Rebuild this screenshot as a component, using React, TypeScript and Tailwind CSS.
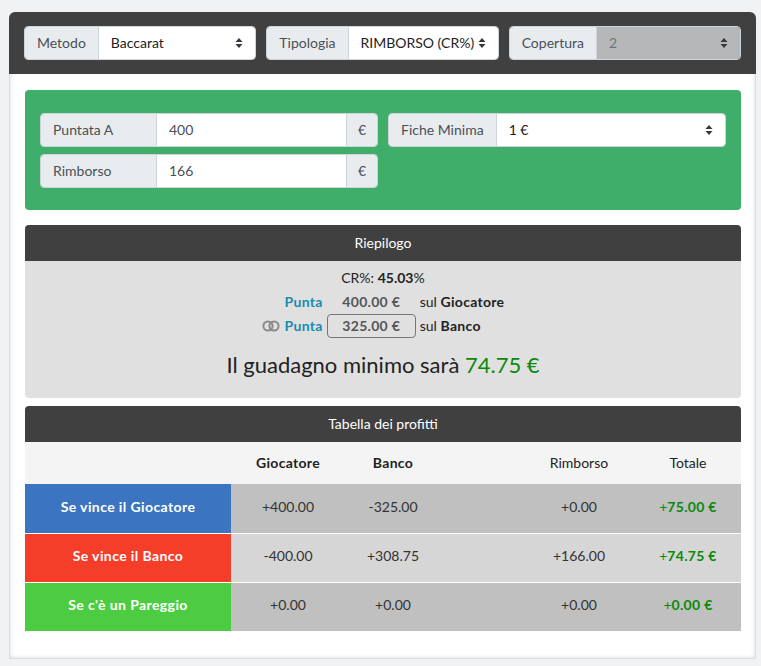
import React from "react";

const Caret = () => (
  <svg width="8" height="12" viewBox="0 0 8 12" className="shrink-0">
    <path d="M4 1 L7.5 5 H0.5 Z" fill="#343a40" />
    <path d="M4 11 L7.5 7 H0.5 Z" fill="#343a40" />
  </svg>
);

function SelectGroup({ label, value, disabled }: { label: string; value: string; disabled?: boolean }) {
  return (
    <div className="flex-1 flex h-[34px] rounded-[4px] border border-[#ced4da] overflow-hidden">
      <div className="flex items-center px-3 bg-[#e9ecef] text-[#495057] border-r border-[#ced4da] whitespace-nowrap">{label}</div>
      <div
        className={
          disabled
            ? "flex-1 flex items-center justify-between pl-3 pr-3 bg-[#b6b7b9] text-[#6c757d]"
            : "flex-1 flex items-center justify-between pl-3 pr-3 bg-white text-[#222]"
        }
      >
        <span className="whitespace-nowrap">{value}</span>
        <Caret />
      </div>
    </div>
  );
}

function InputGroup({ label, value }: { label: string; value: string }) {
  return (
    <div className="flex h-[34px] rounded-[4px] border border-[#ced4da] overflow-hidden">
      <div className="flex items-center w-[116px] px-3 bg-[#e9ecef] text-[#495057] border-r border-[#ced4da] whitespace-nowrap">{label}</div>
      <div className="flex-1 flex items-center px-3 bg-white text-[#495057]">{value}</div>
      <div className="flex items-center justify-center w-[31px] bg-[#e9ecef] text-[#495057] border-l border-[#ced4da]">€</div>
    </div>
  );
}

const rows = [
  { label: "Se vince il Giocatore", color: "bg-[#3b74c1]", bg: "bg-[#c0c0c0]", g: "+400.00", b: "-325.00", r: "+0.00", t: "75.00 €" },
  { label: "Se vince il Banco", color: "bg-[#f53e29]", bg: "bg-[#d6d6d6]", g: "-400.00", b: "+308.75", r: "+166.00", t: "74.75 €" },
  { label: "Se c'è un Pareggio", color: "bg-[#4ccd41]", bg: "bg-[#c0c0c0]", g: "+0.00", b: "+0.00", r: "+0.00", t: "0.00 €" },
];

export default function App() {
  return (
    <div
      className="min-h-screen bg-[#f1f2f4] pt-3 pl-[9px] text-[14px] leading-[20px]"
      style={{ fontFamily: '"Segoe UI", Lato, "Noto Sans", sans-serif' }}
    >
      <div className="w-[747px]">
        {/* top bar */}
        <div className="bg-[#404040] rounded-t-[6px] h-[62px] pl-[15px] pr-[15px] flex items-center gap-[10px]">
          <SelectGroup label="Metodo" value="Baccarat" />
          <SelectGroup label="Tipologia" value="RIMBORSO (CR%)" />
          <SelectGroup label="Copertura" value="2" disabled />
        </div>

        {/* card */}
        <div className="bg-white border-x border-b border-[#dcdcdc] shadow-[inset_3px_0_4px_-2px_rgba(0,0,0,0.08),inset_-3px_0_4px_-2px_rgba(0,0,0,0.08),inset_0_-3px_4px_-2px_rgba(0,0,0,0.08)] pl-[15px] pr-[14px] pt-4 pb-[27px]">
          {/* green panel */}
          <div className="bg-[#3fae6b] rounded-[4px] px-[15px] pt-[23px] pb-[22px] grid grid-cols-2 gap-x-[10px] gap-y-[7px]">
            <InputGroup label="Puntata A" value="400" />
            <div className="flex h-[34px] rounded-[4px] border border-[#ced4da] overflow-hidden">
              <div className="flex items-center px-3 bg-[#e9ecef] text-[#495057] border-r border-[#ced4da] whitespace-nowrap">Fiche Minima</div>
              <div className="flex-1 flex items-center justify-between px-3 bg-white text-[#222]">
                <span>1 €</span>
                <Caret />
              </div>
            </div>
            <InputGroup label="Rimborso" value="166" />
          </div>

          {/* summary */}
          <div className="mt-[15px] rounded-[4px] overflow-hidden">
            <div className="bg-[#404040] h-[36px] flex items-center justify-center text-white">Riepilogo</div>
            <div className="bg-[#e0e0e0] pt-[7px] pb-[18px] text-[#222]">
              <div className="text-center">
                CR%: <b>45.03</b>%
              </div>
              <div className="w-fit mx-auto grid grid-cols-[auto_auto_auto] gap-x-[4px] gap-y-[0px] items-center mt-[2px]">
                <div className="flex justify-end items-center h-[24px]">
                  <span className="font-bold tracking-[0.3px] text-[#1a8bb1]">Punta</span>
                </div>
                <div className="w-[89px] h-[24px] flex items-center justify-center font-bold tracking-[0.3px] text-[#555]">400.00 €</div>
                <div>
                  sul <b className="tracking-[0.3px]">Giocatore</b>
                </div>
                <div className="flex justify-end items-center gap-[5px] h-[24px]">
                  <svg width="18" height="12" viewBox="0 0 18 12">
                    <circle cx="6" cy="6" r="4.6" fill="none" stroke="#8a8a8a" strokeWidth="2" />
                    <circle cx="12" cy="6" r="4.6" fill="none" stroke="#8a8a8a" strokeWidth="2" />
                  </svg>
                  <span className="font-bold tracking-[0.3px] text-[#1a8bb1]">Punta</span>
                </div>
                <div className="w-[89px] h-[24px] flex items-center justify-center font-bold tracking-[0.3px] text-[#555] border border-[#767676] rounded-[4px]">
                  325.00 €
                </div>
                <div>
                  sul <b className="tracking-[0.3px]">Banco</b>
                </div>
              </div>
              <div className="text-center text-[22px] leading-[30px] mt-[12px]">
                Il guadagno minimo sarà <span className="text-[#0a8a0a]">74.75 €</span>
              </div>
            </div>
          </div>

          {/* table */}
          <div className="mt-[8px] rounded-t-[4px] overflow-hidden">
            <div className="bg-[#404040] h-[36px] flex items-center justify-center text-white">Tabella dei profitti</div>
            <div className="grid grid-cols-[206px_114px_96px_82px_112px_106px] bg-[#f4f4f4] h-[42px] items-center text-[#222]">
              <div />
              <div className="text-center font-bold tracking-[0.3px]">Giocatore</div>
              <div className="text-center font-bold tracking-[0.3px]">Banco</div>
              <div />
              <div className="text-center">Rimborso</div>
              <div className="text-center">Totale</div>
            </div>
            {rows.map((r, i) => (
              <div
                key={i}
                className={
                  "grid grid-cols-[206px_114px_96px_82px_112px_106px] h-[49px] items-stretch text-[#333] " +
                  r.bg +
                  (i > 0 ? " border-t border-white" : "")
                }
              >
                <div className={"flex items-center justify-center pb-[4px] text-white font-bold tracking-[0.4px] " + r.color}>{r.label}</div>
                <div className="flex items-center justify-center pb-[4px]">{r.g}</div>
                <div className="flex items-center justify-center pb-[4px]">{r.b}</div>
                <div />
                <div className="flex items-center justify-center pb-[4px]">{r.r}</div>
                <div className="flex items-center justify-center pb-[4px] text-[#0a8a0a]">
                  +<b className="tracking-[0.3px]">{r.t}</b>
                </div>
              </div>
            ))}
          </div>
        </div>
      </div>
    </div>
  );
}
